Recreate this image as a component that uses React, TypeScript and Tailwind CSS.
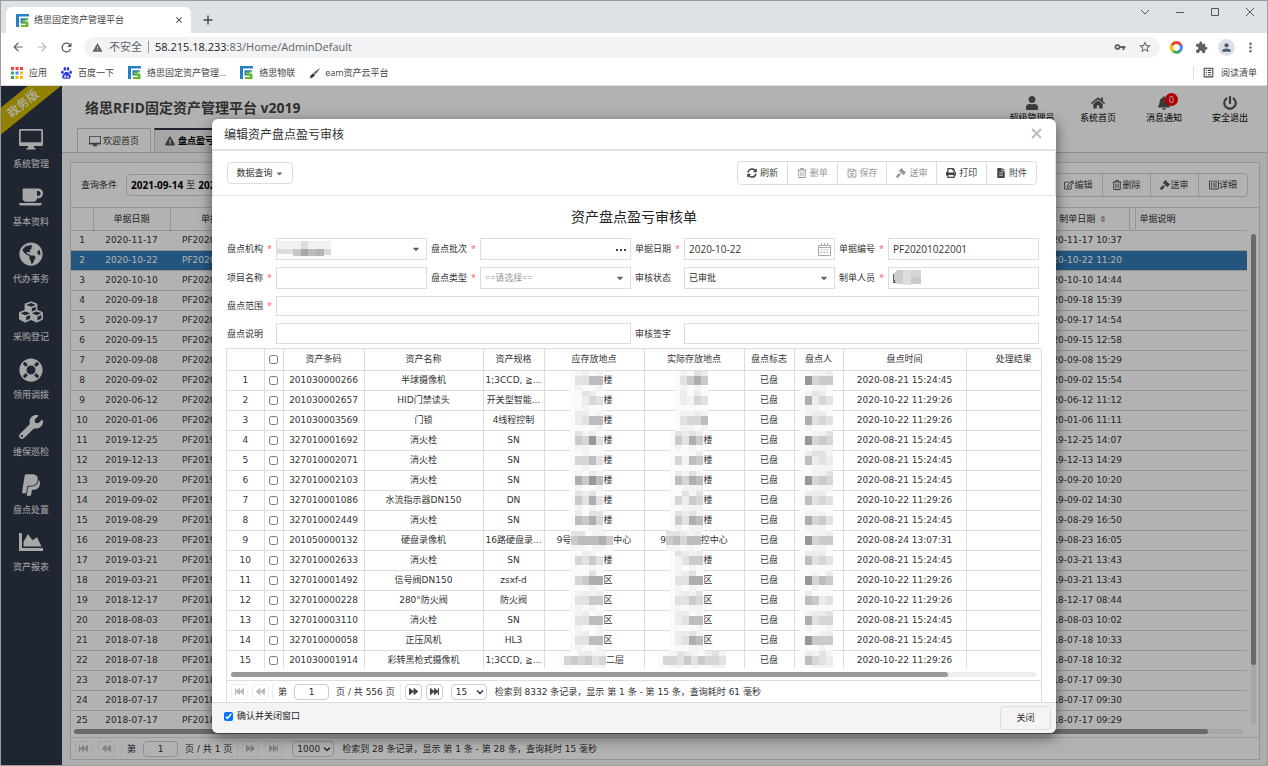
import { useState, type ReactNode } from 'react';
import {
  FaBackward,
  FaBell,
  FaCaretDown,
  FaCoffee,
  FaCubes,
  FaChartArea,
  FaExclamationTriangle,
  FaFastBackward,
  FaFastForward,
  FaFileAlt,
  FaForward,
  FaGavel,
  FaGlobeAmericas,
  FaHome,
  FaLifeRing,
  FaPaypal,
  FaPowerOff,
  FaPrint,
  FaRegEdit,
  FaRegListAlt,
  FaRegSave,
  FaRegTrashAlt,
  FaSort,
  FaSyncAlt,
  FaUser,
  FaWrench,
} from 'react-icons/fa';
import {
  MdArrowBack,
  MdArrowForward,
  MdClose,
  MdExtension,
  MdMoreVert,
  MdOutlineListAlt,
  MdPerson,
  MdRefresh,
  MdStarOutline,
  MdVpnKey,
  MdWarning,
} from 'react-icons/md';
import type { IconType } from 'react-icons';

const menu: { label: string; icon: IconType | typeof ScreenIcon }[] = [
  { label: '系统管理', icon: ScreenIcon },
  { label: '基本资料', icon: FaCoffee },
  { label: '代办事务', icon: FaGlobeAmericas },
  { label: '采购登记', icon: FaCubes },
  { label: '领用调拨', icon: FaLifeRing },
  { label: '维保巡检', icon: FaWrench },
  { label: '盘点处置', icon: FaPaypal },
  { label: '资产报表', icon: FaChartArea },
];

const orders = [
  ['2020-11-17', '10:37'],
  ['2020-10-22', '11:20'],
  ['2020-10-10', '14:44'],
  ['2020-09-18', '15:39'],
  ['2020-09-17', '14:54'],
  ['2020-09-15', '12:58'],
  ['2020-09-08', '15:29'],
  ['2020-09-02', '15:54'],
  ['2020-06-12', '11:12'],
  ['2020-01-06', '11:11'],
  ['2019-12-25', '14:07'],
  ['2019-12-13', '14:29'],
  ['2019-09-20', '10:20'],
  ['2019-09-02', '14:30'],
  ['2019-08-29', '16:50'],
  ['2019-08-23', '16:05'],
  ['2019-03-21', '13:43'],
  ['2019-03-21', '13:43'],
  ['2018-12-17', '08:44'],
  ['2018-08-03', '10:02'],
  ['2018-07-18', '10:33'],
  ['2018-07-18', '10:32'],
  ['2018-07-17', '09:30'],
  ['2018-07-17', '09:30'],
  ['2018-07-17', '09:29'],
];

const EARLY = '2020-08-21 15:24:45';
const LATE = '2020-10-22 11:29:26';

// place / actual / person are masked: a shade digit (0 light - 9 dark) per block
const assets = [
  { code: '201030000266', name: '半球摄像机', spec: '1;3CCD, ≧...', time: EARLY, end: '楼', end2: '', place: '3366', actual: '3575', person: '8455' },
  { code: '201030002657', name: 'HID门禁读头', spec: '开关型智能...', time: LATE, end: '楼', end2: '', place: '0243', actual: '2143', person: '7243' },
  { code: '201030003569', name: '门锁', spec: '4线程控制', time: LATE, end: '楼', end2: '', place: '2366', actual: '3446', person: '7343' },
  { code: '327010001692', name: '消火栓', spec: 'SN', time: EARLY, end: '楼', end2: '楼', place: '5483', actual: '5375', person: '8454' },
  { code: '327010002071', name: '消火栓', spec: 'SN', time: EARLY, end: '楼', end2: '楼', place: '4463', actual: '4165', person: '6232' },
  { code: '327010002103', name: '消火栓', spec: 'SN', time: EARLY, end: '楼', end2: '楼', place: '7586', actual: '6476', person: '8454' },
  { code: '327010001086', name: '水流指示器DN150', spec: 'DN', time: LATE, end: '楼', end2: '楼', place: '5373', actual: '4254', person: '6343' },
  { code: '327010002449', name: '消火栓', spec: 'SN', time: EARLY, end: '楼', end2: '楼', place: '6574', actual: '5376', person: '7453' },
  { code: '201050000132', name: '硬盘录像机', spec: '16路硬盘录...', time: '2020-08-24 13:07:31', end: '中心', end2: '控中心', place: '566675', actual: '56466', person: '8455' },
  { code: '327010002633', name: '消火栓', spec: 'SN', time: EARLY, end: '楼', end2: '楼', place: '4353', actual: '1355', person: '6343' },
  { code: '327010001492', name: '信号阀DN150', spec: 'zsxf-d', time: LATE, end: '区', end2: '区', place: '4577', actual: '3377', person: '8465' },
  { code: '327010000228', name: '280°防火阀', spec: '防火阀', time: LATE, end: '区', end2: '区', place: '3355', actual: '3354', person: '6523' },
  { code: '327010003110', name: '消火栓', spec: 'SN', time: EARLY, end: '区', end2: '区', place: '3366', actual: '2366', person: '7344' },
  { code: '327010000058', name: '正压风机', spec: 'HL3', time: EARLY, end: '区', end2: '区', place: '3366', actual: '2376', person: '8555' },
  { code: '201030001914', name: '彩转黑枪式摄像机', spec: '1;3CCD, ≧...', time: LATE, end: '二层', end2: '', place: '454534', actual: '443535443', person: '6432' },
];

const shades = ['#fafafa', '#f3f3f3', '#ececec', '#e2e2e2', '#d6d6d6', '#cacaca', '#bdbdbd', '#aeaeae', '#989898', '#858585'];

export default function App() {
  return (
    <div className="flex h-screen flex-col overflow-hidden border border-[#9d9d9d] bg-white font-['Open_Sans','Noto_Sans_CJK_SC',sans-serif] text-[9px] leading-3 text-[#333]">
      <BrowserChrome />
      <div className="relative flex min-h-0 flex-1">
        <Sidebar />
        <OrdersPage />
        <div className="absolute inset-0 bg-black/30 px-[211px] pt-[33px] pb-8">
          <AuditDialog />
        </div>
      </div>
    </div>
  );
}

function BrowserChrome() {
  return (
    <header className="shrink-0">
      <div className="flex h-8 items-end bg-[#dee1e6] pl-[5px]">
        <div className="flex h-[26px] w-[185px] items-center gap-[5px] rounded-t-md bg-white pr-[7px] pl-2.5">
          <Logo />
          <span className="flex-1 text-[#444]">络思固定资产管理平台</span>
          <button aria-label="关闭标签页">
            <MdClose size={10} />
          </button>
        </div>
        <button className="mb-2 ml-3 text-[#444]" aria-label="新标签页">
          <svg width="10" height="10" viewBox="0 0 10 10" stroke="currentColor" strokeWidth="1.4">
            <path d="M5 0.5v9M0.5 5h9" />
          </svg>
        </button>
        <div className="mb-4 ml-auto flex items-center gap-[25px] pr-3 text-[#555]">
          <svg width="10" height="10" viewBox="0 0 10 10" fill="none" stroke="currentColor">
            <path d="M1 3l4 4 4-4" />
          </svg>
          <svg width="10" height="10" viewBox="0 0 10 10" fill="none" stroke="currentColor">
            <path d="M1 5.5h8" />
          </svg>
          <svg width="10" height="10" viewBox="0 0 10 10" fill="none" stroke="currentColor">
            <path d="M1.5 1.5h7v7h-7z" />
          </svg>
          <svg width="10" height="10" viewBox="0 0 10 10" fill="none" stroke="currentColor">
            <path d="M1 1l8 8M9 1l-8 8" />
          </svg>
        </div>
      </div>
      <div className="flex h-7 items-center pr-[9px] pl-2.5 text-[#5f6368]">
        <MdArrowBack size={14} />
        <MdArrowForward size={14} className="ml-2.5 text-[#bbb]" />
        <MdRefresh size={15} className="ml-2.5" />
        <div className="ml-2.5 flex h-[21px] flex-1 items-center rounded-full bg-[#f1f3f4] px-2 text-[11px]">
          <MdWarning size={11} />
          <span className="ml-1.5">不安全</span>
          <span className="mx-1.5 h-3 w-px bg-[#999]" />
          <span>
            <span className="text-[#202124]">58.215.18.233</span>:83/Home/AdminDefault
          </span>
          <MdVpnKey size={12} className="ml-auto" />
          <MdStarOutline size={14} className="ml-3" />
        </div>
        <svg width="13" height="13" viewBox="0 0 14 14" fill="none" strokeWidth="3.2" className="ml-2.5">
          <path d="M2.2 4.6A5.2 5.2 0 0 1 11.6 4.6" stroke="#ea4335" />
          <path d="M11.6 4.4A5.2 5.2 0 0 1 10 11.2" stroke="#4285f4" />
          <path d="M10.4 11A5.2 5.2 0 0 1 3.4 10.8" stroke="#34a853" />
          <path d="M3.6 11A5.2 5.2 0 0 1 2.3 4.4" stroke="#fbbc05" />
        </svg>
        <MdExtension size={13} className="ml-3" />
        <span className="ml-2.5 flex h-[17px] w-[17px] items-center justify-center rounded-full bg-[#dbe0e8] text-[#4a5a73]">
          <MdPerson size={13} />
        </span>
        <MdMoreVert size={15} className="ml-2" />
      </div>
      <div className="flex h-[25px] items-center border-b border-[#ddd] pb-px pl-2.5 text-[#444]">
        <svg width="12" height="12" viewBox="0 0 12 12">
          <path d="M0 0h3v3H0zM4.5 0h3v3h-3zM9 0h3v3H9z" fill="#ea4335" />
          <path d="M0 4.5h3v3H0zM0 9h3v3H0z" fill="#34a853" />
          <path d="M4.5 4.5h3v3h-3z" fill="#4285f4" />
          <path d="M9 4.5h3v3H9zM4.5 9h3v3h-3zM9 9h3v3H9z" fill="#fbbc05" />
        </svg>
        <a href="#apps" className="ml-1.5">应用</a>
        <svg width="11" height="12" viewBox="0 0 11 12" fill="#2932e1" className="ml-3.5">
          <ellipse cx="1.4" cy="5.2" rx="1.3" ry="1.7" />
          <ellipse cx="3.8" cy="1.9" rx="1.3" ry="1.8" />
          <ellipse cx="7" cy="1.9" rx="1.3" ry="1.8" />
          <ellipse cx="9.6" cy="5.2" rx="1.3" ry="1.7" />
          <path d="M5.5 4.8c2 0 2.200 2 3.500 3 1.600 1.400.8 4-1.200 4H3.200c-2 0-2.800-2.600-1.200-4 1.300-1 1.500-3 3.500-3z" />
          <path d="M4.400 7.500v3H3.300v-1.600h1M6 8.500v2h1.600v-2" fill="none" stroke="#fff" strokeWidth=".7" />
        </svg>
        <a href="#baidu" className="ml-1.5">百度一下</a>
        <span className="ml-3.5"><Logo /></span>
        <a href="#asset" className="ml-1.5">络思固定资产管理...</a>
        <span className="ml-3.5"><Logo /></span>
        <a href="#iot" className="ml-1.5">络思物联</a>
        <svg width="12" height="12" viewBox="0 0 12 12" className="ml-3.5">
          <path d="M11.500.8 7 7 4.800 5.200z" fill="#666" />
          <path d="M4.800 5.200 7 7 6 8.200 3.800 6.400z" fill="#999" />
          <path d="M3.800 6.400 6 8.200 3.600 10.400.8 11.300 1.700 8.400z" fill="#333" />
        </svg>
        <a href="#eam" className="ml-1">eam资产云平台</a>
        <div className="ml-auto flex items-center gap-1.5 border-l border-[#ddd] pr-2.5 pl-2">
          <MdOutlineListAlt size={13} />
          阅读清单
        </div>
      </div>
    </header>
  );
}

function Logo() {
  return (
    <svg width="13" height="13" viewBox="0 0 13 13">
      <path d="M0 0h13v2.500H3V13H0z" fill="#2680c2" />
      <path d="M4.500 4.200H12v2H6.500v1.600h5V11H9.800V9.400H4.500z" fill="#2680c2" />
      <path d="M12 4.200v2H9.500v1.500h3V13H5v-2h5.500V9.400H6.300V6h2z" fill="#72b82c" />
    </svg>
  );
}

function ScreenIcon({ size = 16 }: { size?: number }) {
  return (
    <svg width={size} height={size} viewBox="0 0 24 24" fill="currentColor">
      <path
        fillRule="evenodd"
        d="M1.500 2h21A1.500 1.500 0 0 1 24 3.500v14a1.500 1.500 0 0 1-1.500 1.500H15v2h1.500v1.500h-9V21H9v-2H1.500A1.500 1.500 0 0 1 0 17.500v-14A1.500 1.500 0 0 1 1.500 2zM1.700 3.700v11.600h20.600V3.700z"
      />
    </svg>
  );
}

function Sidebar() {
  return (
    <aside className="relative w-[61px] shrink-0 overflow-hidden bg-[#2d3748] pt-[39px] text-[#f0f0f0]">
      <div className="absolute top-[5px] -left-[26px] w-[100px] -rotate-[39deg] bg-[#cdb800] py-[3px] pr-1.5 text-center text-[12px] leading-[15px] font-medium text-white">
        政务版
      </div>
      <nav className="relative grid h-[461px] grid-rows-8 pr-px">
        {menu.map(({ label, icon: Icon }) => (
          <a key={label} href="#menu" className="flex flex-col items-center gap-[7px] pt-0.5">
            <Icon size={24} />
            {label}
          </a>
        ))}
      </nav>
    </aside>
  );
}

function OrdersPage() {
  return (
    <main className="flex min-w-0 flex-1 flex-col bg-[#f8f8f8]">
      <div className="flex h-[67px] shrink-0 flex-col justify-between border-b border-[#ccc] bg-white pt-2.5">
        <div className="flex justify-between pr-3.5 pl-[23px]">
          <h1 className="text-[14px] leading-6 font-bold text-[#444]">络思RFID固定资产管理平台 v2019</h1>
          <div className="flex gap-5">
            <HeaderLink icon={FaUser} label="超级管理员" />
            <HeaderLink icon={FaHome} label="系统首页" />
            <HeaderLink icon={FaBell} label="消息通知" badge="0" />
            <HeaderLink icon={FaPowerOff} label="安全退出" />
          </div>
        </div>
        <div className="-mt-4 flex gap-[3px] pl-[15px]">
          <a href="#home" className="flex h-6 w-[74px] items-center justify-center gap-0.5 border border-b-0 border-[#ccc]">
            <span className="text-[#555]"><ScreenIcon size={12} /></span>
            欢迎首页
          </a>
          <a href="#audit" className="flex h-6 w-[70px] items-center gap-[3px] border border-t-2 border-b-0 border-[#ccc] border-t-[#2d3748] bg-[#f0f0f0] pl-2.5 font-bold whitespace-nowrap text-black">
            <FaExclamationTriangle size={10} className="shrink-0 text-[#555]" />
            盘点盈亏
          </a>
        </div>
      </div>
      <section className="mt-[9px] mr-[7px] mb-[5px] ml-2 flex min-h-0 flex-1 flex-col border border-[#d4d4d4] bg-white font-['DejaVu_Sans','Noto_Sans_CJK_SC',sans-serif]">
        <div className="flex h-[45px] shrink-0 items-center justify-between border-b border-[#d4d4d4] pr-[11px] pl-2.5">
          <div className="flex items-center gap-[9px] font-['Open_Sans','Noto_Sans_CJK_SC',sans-serif]">
            查询条件
            <div className="flex h-[22px] w-32 items-center gap-[3px] rounded-sm border border-[#d4d4d4] pl-1 whitespace-nowrap">
              <b className="text-[10px] text-black">2021-09-14</b> 至 <b className="text-[10px] text-black">2021-10-14</b>
            </div>
          </div>
          <div className="flex h-6 divide-x divide-[#d4d4d4] rounded-sm border border-[#d4d4d4] text-[#444]">
            <PlainButton icon={FaRegEdit} label="编辑" />
            <PlainButton icon={FaRegTrashAlt} label="删除" />
            <PlainButton icon={FaGavel} label="送审" />
            <PlainButton icon={FaRegListAlt} label="详细" />
          </div>
        </div>
        <div className="flex min-h-0 flex-1 overflow-hidden">
          <table className="h-min flex-1 table-fixed border-collapse text-center">
            <colgroup>
              <col className="w-[22px]" />
              <col className="w-[77px]" />
              <col className="w-[98px]" />
              <col />
              <col className="w-[99px]" />
              <col className="w-[118px]" />
            </colgroup>
            <thead>
              <tr className="h-[22px] border-b border-[#d4d4d4]">
                <th className="border-r border-[#d4d4d4]" aria-label="序号" />
                <th className="border-r border-[#d4d4d4] font-normal">单据日期</th>
                <th className="border-r border-[#d4d4d4] font-normal">单据编号</th>
                <th />
                <th className="border-r border-[#d4d4d4] font-normal">
                  <span className="inline-flex items-center gap-1 pl-2">
                    制单日期 <FaSort size={8} className="text-[#999]" />
                  </span>
                </th>
                <th className="py-0 pr-0 pl-[5px] text-left font-normal">
                  <div className="flex h-[21px] items-center border-l border-[#d4d4d4] pl-1">单据说明</div>
                </th>
              </tr>
            </thead>
            <tbody>
              {orders.map(([date, time], i) => (
                <tr
                  key={i}
                  className={`h-5 border-b border-[#d4d4d4] ${i === 1 ? 'bg-[#337ab7] text-white' : ''}`}
                >
                  <td>{i + 1}</td>
                  <td>{date}</td>
                  <td className="p-0 pl-3 text-left">PF{date.slice(0, 4)}...</td>
                  <td />
                  <td className="py-0 pr-0 pl-1 whitespace-nowrap">
                    {date} {time}
                  </td>
                  <td />
                </tr>
              ))}
            </tbody>
          </table>
          <div className="mt-[26px] mr-[3px] mb-1 ml-1 w-[5px] rounded-full bg-[#eee]">
            <div className="h-[88%] rounded-full bg-[#999]" />
          </div>
        </div>
        <div className="mt-px mr-4 ml-[3px] h-[5px] shrink-0 rounded-full bg-[#eee]">
          <div className="h-full w-[97%] rounded-full bg-[#999]" />
        </div>
        <Pager total="1" size="1000" summary="检索到 28 条记录，显示 第 1 条 - 第 28 条，查询耗时 15 毫秒" atEnd />
      </section>
    </main>
  );
}

function HeaderLink({ icon: Icon, label, badge }: { icon: IconType; label: string; badge?: string }) {
  return (
    <a href="#top" className="relative flex min-w-[46px] flex-col items-center gap-0.5 text-black">
      <Icon size={14} className="text-[#555]" />
      {label}
      {badge && (
        <span className="absolute -top-[3px] left-6 flex h-[13px] w-[13px] items-center justify-center rounded-full bg-[#f00] text-white">
          {badge}
        </span>
      )}
    </a>
  );
}

function PlainButton({ icon: Icon, label }: { icon: IconType; label: string }) {
  return (
    <button className="flex w-12 items-center justify-center">
      <Icon size={10} className="text-[#555]" />
      {label}
    </button>
  );
}

function Pager({ total, size, summary, atEnd = false }: { total: string; size: string; summary: string; atEnd?: boolean }) {
  const gap = atEnd ? 'gap-1.5' : 'gap-1';
  return (
    <div className="mt-[3px] flex h-[22px] shrink-0 items-center border-t border-[#ddd] pl-1 whitespace-nowrap">
      <div className={`flex ${gap}`}>
        <PageButton label="首页" disabled><FaFastBackward size={9} /></PageButton>
        <PageButton label="上一页" disabled><FaBackward size={9} /></PageButton>
      </div>
      <label className={`flex items-center gap-[7px] border-l border-[#eee] pl-[5px] ${atEnd ? 'ml-1.5' : 'ml-[3px]'}`}>
        第
        <input defaultValue="1" className="h-4 w-[35px] rounded border border-[#ccc] bg-transparent text-center" />
        页 / 共 {total} 页
      </label>
      <div className={`ml-[5px] flex border-l border-[#eee] pl-1 ${gap}`}>
        <PageButton label="下一页" disabled={atEnd}><FaForward size={9} /></PageButton>
        <PageButton label="末页" disabled={atEnd}><FaFastForward size={9} /></PageButton>
      </div>
      <div className={`relative mr-2 ${atEnd ? 'ml-2.5 w-[42px]' : 'ml-2 w-9'}`}>
        <select
          aria-label="每页条数"
          className="block h-4 w-full appearance-none rounded border border-[#ccc] bg-transparent pl-1"
        >
          <option>{size}</option>
        </select>
        <svg width="8" height="8" viewBox="0 0 8 8" fill="none" stroke="#333" strokeWidth="1.4" className="pointer-events-none absolute top-1 right-[3px]">
          <path d="M1 2.500l3 3 3-3" />
        </svg>
      </div>
      {summary}
    </div>
  );
}

function PageButton({ label, disabled = false, children }: { label: string; disabled?: boolean; children: ReactNode }) {
  return (
    <button
      aria-label={label}
      disabled={disabled}
      className={`flex h-4 w-[17px] items-center justify-center rounded border ${
        disabled ? 'border-[#eee] text-[#bbb]' : 'border-[#ccc] text-[#444]'
      }`}
    >
      {children}
    </button>
  );
}

function AuditDialog() {
  const [closeAfter, setCloseAfter] = useState(true);

  return (
    <div
      role="dialog"
      aria-label="编辑资产盘点盈亏审核"
      className="flex h-full flex-col overflow-hidden rounded-md bg-white shadow-[0_4px_14px_rgba(0,0,0,0.55)]"
    >
      <div className="flex h-8 shrink-0 items-center justify-between border-b-2 border-[#e2e2e2] px-3 pt-0.5">
        <h2 className="text-[12px]">编辑资产盘点盈亏审核</h2>
        <button className="pb-1 text-[#bbb]" aria-label="关闭对话框">
          <svg width="15" height="15" viewBox="0 0 15 15" stroke="currentColor" strokeWidth="1.800">
            <path d="M3 3l9 9M12 3l-9 9" />
          </svg>
        </button>
      </div>
      <div className="flex h-[45px] shrink-0 items-center justify-between border-x border-b border-[#e2e2e2] pr-[18px] pl-3.5">
        <button className="flex h-[22px] w-[66px] items-center justify-center gap-0.5 rounded-sm border border-[#ddd]">
          数据查询 <FaCaretDown size={9} className="text-[#666]" />
        </button>
        <div className="flex h-6 w-[300px] divide-x divide-[#ddd] rounded border border-[#ddd]">
          <ToolButton icon={FaSyncAlt} label="刷新" />
          <ToolButton icon={FaRegTrashAlt} label="删单" disabled />
          <ToolButton icon={FaRegSave} label="保存" disabled />
          <ToolButton icon={FaGavel} label="送审" disabled />
          <ToolButton icon={FaPrint} label="打印" />
          <ToolButton icon={FaFileAlt} label="附件" />
        </div>
      </div>
      <h3 className="my-2.5 shrink-0 text-center text-[14px] leading-[22px] text-[#222]">资产盘点盈亏审核单</h3>
      <AuditForm />
      <AssetTable />
      <div className="flex h-[31px] shrink-0 items-center justify-between border-t border-[#ddd] bg-[#f4f4f4] pr-[5px] pl-3">
        <label className="flex items-center gap-1 pb-1 text-[#222]">
          <input
            type="checkbox"
            className="h-[9px] w-[9px]"
            checked={closeAfter}
            onChange={(e) => setCloseAfter(e.target.checked)}
          />
          确认并关闭窗口
        </label>
        <button className="h-6 w-[51px] rounded-sm border border-[#ddd]">关闭</button>
      </div>
    </div>
  );
}

function ToolButton({ icon: Icon, label, disabled = false }: { icon: IconType; label: string; disabled?: boolean }) {
  return (
    <button
      disabled={disabled}
      className={`flex flex-1 items-center justify-center gap-[3px] ${disabled ? 'text-[#999]' : 'text-[#444]'}`}
    >
      <Icon size={10} />
      {label}
    </button>
  );
}

const box = 'w-full border border-[#ddd] bg-white pl-1 outline-none appearance-none';

function AuditForm() {
  return (
    <form className="mr-[17px] ml-[15px] grid shrink-0 grid-cols-4 gap-x-1 gap-y-[7px]">
      <Field id="org" label="盘点机构" required>
        <select id="org" className={`${box} h-[22px]`} />
        <Caret />
        <svg width="54" height="16" className="absolute top-[3px] left-px" shapeRendering="crispEdges">
          <path d="M0 0h54v8H0z" fill="#f1f1f1" />
          <path d="M24 0h7v8h-7z" fill="#dedede" />
          <path d="M0 8h16v5H0z" fill="#ddd" />
          <path d="M16 8h8v7h-8z" fill="#c6c6c6" />
          <path d="M24 8h7v7h-7z" fill="#a8a8a8" />
          <path d="M31 8h8v7h-8z" fill="#bdbdbd" />
          <path d="M39 8h8v7h-8z" fill="#b4b4b4" />
          <path d="M47 8h7v6h-7z" fill="#d9d9d9" />
        </svg>
      </Field>
      <Field id="batch" label="盘点批次" required>
        <input id="batch" className={`${box} h-[22px]`} />
        <span className="absolute top-[11px] right-[5px] flex gap-[2px]">
          <i className="h-[2px] w-[2px] bg-[#444]" />
          <i className="h-[2px] w-[2px] bg-[#444]" />
          <i className="h-[2px] w-[2px] bg-[#444]" />
        </span>
      </Field>
      <Field id="date" label="单据日期" required>
        <input id="date" defaultValue="2020-10-22" className={`${box} h-[22px] text-[10px]`} />
        <svg width="13" height="13" viewBox="0 0 13 13" fill="none" stroke="#aaa" className="absolute top-[5px] right-1">
          <path d="M.5 2.500h12v10H.5zM.5 4.500h12M3.500 0v3M6.500 0v3M9.500 0v3" />
          <path d="M2.500 7h8M2.500 9.500h8" strokeDasharray="1.600 1.400" />
        </svg>
      </Field>
      <Field id="number" label="单据编号" required>
        <input id="number" defaultValue="PF20201022001" className={`${box} h-[22px] text-[10px]`} />
      </Field>
      <Field id="project" label="项目名称" required>
        <input id="project" className={`${box} h-[22px]`} />
      </Field>
      <Field id="kind" label="盘点类型" required>
        <select id="kind" className={`${box} h-[22px] text-[#999]`}>
          <option>==请选择==</option>
        </select>
        <Caret />
      </Field>
      <Field id="state" label="审核状态">
        <select id="state" className={`${box} h-[22px]`}>
          <option>已审批</option>
        </select>
        <Caret />
      </Field>
      <Field id="maker" label="制单人员" required>
        <input id="maker" className={`${box} h-[22px]`} />
        <svg width="30" height="16" className="absolute top-[2px] left-1" shapeRendering="crispEdges">
          <path d="M1 5h3v9H1z" fill="#666" />
          <path d="M5 1h6v14H5L2 10V4z" fill="#ccc" />
          <path d="M11 1h8v15h-8z" fill="#ddd" />
          <path d="M19 1h10v7H19z" fill="#d4d4d4" />
          <path d="M19 8h10v7H19z" fill="#cacaca" />
        </svg>
      </Field>
      <Field id="scope" label="盘点范围" required span="col-span-4">
        <input id="scope" className={`${box} h-5`} />
      </Field>
      <Field id="note" label="盘点说明" span="col-span-2">
        <input id="note" className={`${box} h-[21px]`} />
      </Field>
      <Field id="sign" label="审核签字" span="col-span-2">
        <input id="sign" className={`${box} h-[21px]`} />
      </Field>
    </form>
  );
}

function Field({ id, label, required = false, span = '', children }: {
  id: string;
  label: string;
  required?: boolean;
  span?: string;
  children: ReactNode;
}) {
  return (
    <div className={`flex items-center ${span}`}>
      <label htmlFor={id} className="w-[49px] shrink-0 whitespace-nowrap">
        {label}
        {required && <span className="ml-1 text-[#ff5b5b]">*</span>}
      </label>
      <div className="relative min-w-0 flex-1">{children}</div>
    </div>
  );
}

function Caret() {
  return <FaCaretDown size={10} className="pointer-events-none absolute top-1.5 right-1.5 text-[#666]" />;
}

const head = 'border-r border-[#ddd] p-0 font-normal whitespace-nowrap';
const cell = 'border-r border-[#ddd] p-0 whitespace-nowrap';

function AssetTable() {
  return (
    <section className="mx-3.5 mt-1 flex min-h-0 flex-1 flex-col border-x border-t border-[#ddd] font-['DejaVu_Sans','Noto_Sans_CJK_SC',sans-serif]">
      <div className="min-h-0 flex-1 overflow-hidden">
        <table className="w-full table-fixed border-collapse text-center">
          <colgroup>
            <col className="w-[37px]" />
            <col className="w-[19px]" />
            <col className="w-[81px]" />
            <col className="w-[119px]" />
            <col className="w-[61px]" />
            <col className="w-[100px]" />
            <col className="w-[100px]" />
            <col className="w-[50px]" />
            <col className="w-[49px]" />
            <col className="w-[123px]" />
            <col />
          </colgroup>
          <thead>
            <tr className="h-[21px] border-b border-[#ddd]">
              <th className={head} aria-label="序号" />
              <th className={head}>
                <input type="checkbox" aria-label="全选" className="mx-auto block h-[9px] w-[9px]" />
              </th>
              <th className={head}>资产条码</th>
              <th className={head}>资产名称</th>
              <th className={head}>资产规格</th>
              <th className={head}>应存放地点</th>
              <th className={head}>实际存放地点</th>
              <th className={head}>盘点标志</th>
              <th className={head}>盘点人</th>
              <th className={head}>盘点时间</th>
              <th className="py-0 pr-0 pl-5 font-normal">处理结果</th>
            </tr>
          </thead>
          <tbody>
            {assets.map((asset, i) => (
              <tr key={asset.code} className="h-5 border-b border-[#ddd]">
                <td className={cell}>{i + 1}</td>
                <td className={cell}>
                  <input type="checkbox" aria-label={asset.code} className="mx-auto block h-[9px] w-[9px]" />
                </td>
                <td className={cell}>{asset.code}</td>
                <td className={cell}>{asset.name}</td>
                <td className={`${cell} overflow-hidden`}>{asset.spec}</td>
                <td className={cell}>
                  <Masked start={i === 8 ? '9号' : ''} blocks={asset.place} end={asset.end} />
                </td>
                <td className={cell}>
                  <Masked start={i === 8 ? '9' : ''} blocks={asset.actual} end={asset.end2} />
                </td>
                <td className={cell}>已盘</td>
                <td className={cell}>
                  <Masked blocks={asset.person} />
                </td>
                <td className={cell}>{asset.time}</td>
                <td />
              </tr>
            ))}
          </tbody>
        </table>
      </div>
      <div className="mt-1 mr-1 ml-1 h-[5px] shrink-0 rounded-full bg-[#eee]">
        <div className="h-full w-[89%] rounded-full bg-[#999]" />
      </div>
      <Pager total="556" size="15" summary="检索到 8332 条记录，显示 第 1 条 - 第 15 条，查询耗时 61 毫秒" />
    </section>
  );
}

function Masked({ start = '', blocks, end = '' }: { start?: string; blocks: string; end?: string }) {
  const list = blocks.split('').map(Number);
  const width = list.length * 7;
  const pad = start ? 0 : 5;
  return (
    <div className="flex h-[19px] items-center justify-center">
      {start}
      <svg width={width} height="20" className="-mb-px shrink-0 overflow-visible" shapeRendering="crispEdges">
        <rect x={-pad} width={width + pad} height="20" fill="#fbfbfb" />
        {list.map((shade, i) => (
          <g key={i}>
            <rect x={i * 7} width="7" height="5" fill={shades[(shade * 3 + i) % 4]} />
            <rect x={i * 7} y="5" width="7" height="9" fill={shades[shade]} />
            <rect x={i * 7} y="14" width="7" height="6" fill={shades[(shade + i) % 2]} />
          </g>
        ))}
      </svg>
      {end}
    </div>
  );
}
